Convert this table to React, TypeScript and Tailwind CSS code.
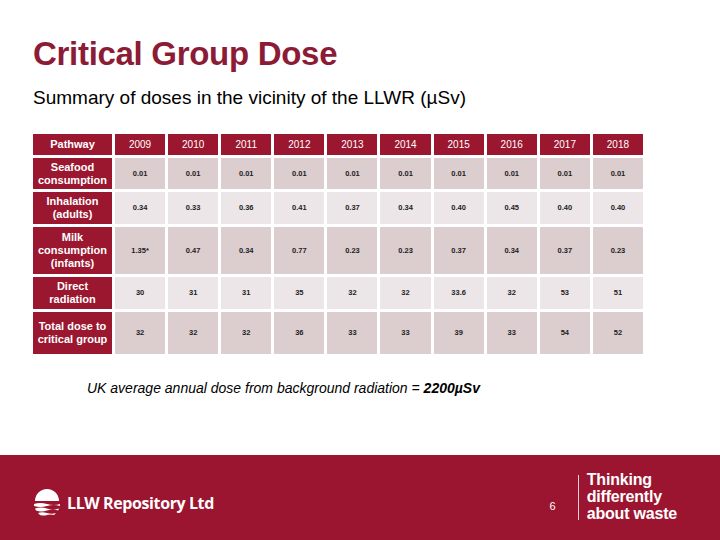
const years = ['2009', '2010', '2011', '2012', '2013', '2014', '2015', '2016', '2017', '2018']

const rows = [
  { label: ['Seafood', 'consumption'], h: 'h-[31px]', values: ['0.01', '0.01', '0.01', '0.01', '0.01', '0.01', '0.01', '0.01', '0.01', '0.01'] },
  { label: ['Inhalation', '(adults)'], h: 'h-[32px]', values: ['0.34', '0.33', '0.36', '0.41', '0.37', '0.34', '0.40', '0.45', '0.40', '0.40'] },
  { label: ['Milk', 'consumption', '(infants)'], h: 'h-[47px]', values: ['1.35*', '0.47', '0.34', '0.77', '0.23', '0.23', '0.37', '0.34', '0.37', '0.23'] },
  { label: ['Direct', 'radiation'], h: 'h-[32px]', values: ['30', '31', '31', '35', '32', '32', '33.6', '32', '53', '51'] },
  { label: ['Total dose to', 'critical group'], h: 'h-[42px]', values: ['32', '32', '32', '36', '33', '33', '39', '33', '54', '52'] },
]

function Logo() {
  return (
    <svg width="30" height="28" viewBox="0 0 30 28">
      <path d="M3 12 A12 12 0 0 1 27 12 Z" fill="white" />
      <path d="M2 15 Q8 13 15 15 T28 15 L28 17 Q22 15 15 17 T2 17 Z" fill="white" />
      <path d="M3 19.5 Q9 17.5 15 19.5 T27 19.5 L26 21.5 Q21 19.5 15 21.5 T4 21.5 Z" fill="white" />
      <path d="M6 24 Q10 22.5 15 24 T24 24 L22 26 Q18 25 15 26 T8 26 Z" fill="white" />
    </svg>
  )
}

export default function App() {
  return (
    <div className="w-[720px] h-[540px] bg-white flex flex-col font-['Liberation_Sans',Arial,sans-serif] overflow-hidden">
      <div className="flex-1 flex flex-col pl-[33px]">
        <h1 className="mt-[34px] text-[33px] leading-[40px] font-bold text-[#8c1b36] tracking-[-0.3px]">Critical Group Dose</h1>
        <p className="mt-[13px] text-[19px] leading-[22px] text-black">Summary of doses in the vicinity of the LLWR (µSv)</p>

        <div className="mt-[25px] w-[610px] grid grid-cols-[79px_repeat(10,1fr)] gap-[3px] text-center">
          <div className="h-[21px] bg-[#9b1730] text-white text-[11px] font-bold flex items-center justify-center">Pathway</div>
          {years.map((y) => (
            <div key={y} className="h-[21px] bg-[#9b1730] text-white text-[10px] flex items-center justify-center">{y}</div>
          ))}
          {rows.map((row, i) => (
            <>
              <div key={row.label.join()} className={`${row.h} bg-[#9b1730] text-white text-[11px] leading-[13px] font-bold flex flex-col items-center justify-center`}>
                {row.label.map((l) => <span key={l}>{l}</span>)}
              </div>
              {row.values.map((v, j) => (
                <div key={`${i}-${j}`} className={`${row.h} ${i % 2 === 0 ? 'bg-[#dccdcf]' : 'bg-[#ede6e8]'} text-[7.5px] font-bold text-[#222] flex items-center justify-center`}>{v}</div>
              ))}
            </>
          ))}
        </div>

        <p className="mt-[24px] ml-[54px] text-[14px] italic text-black">
          UK average annual dose from background radiation = <span className="font-bold">2200µSv</span>
        </p>
      </div>

      <div className="h-[85px] bg-[#9b1530] flex items-center pl-[32px] pr-[43px]">
        <div className="flex items-center gap-[5px] mt-[10px]">
          <Logo />
          <span className="text-white font-bold text-[16px] font-['Open_Sans',sans-serif] tracking-[-0.4px]">LLW Repository Ltd</span>
        </div>
        <div className="ml-auto flex items-center">
          <span className="text-white text-[11px] mt-[18px] mr-[22px]">6</span>
          <div className="w-px h-[45px] bg-white/80 mr-[8px]" />
          <div className="text-white font-bold text-[16px] leading-[17px] tracking-[-0.2px] -mt-[3px]">
            <div>Thinking</div>
            <div>differently</div>
            <div>about waste</div>
          </div>
        </div>
      </div>
    </div>
  )
}
